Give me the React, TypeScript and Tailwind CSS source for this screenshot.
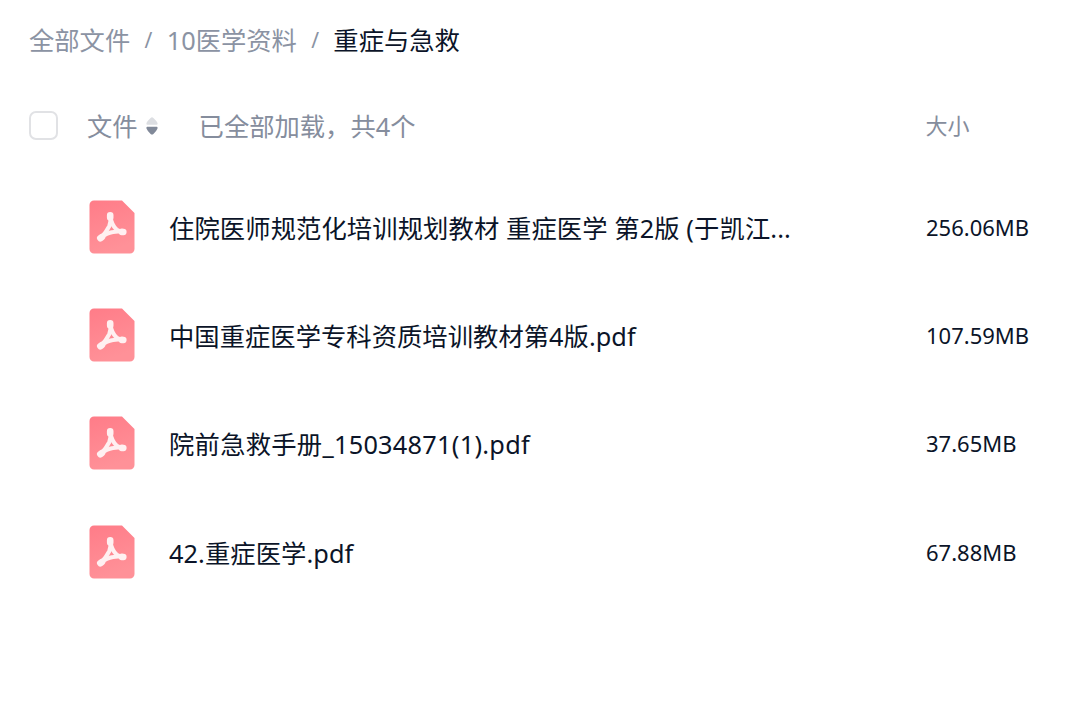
const crumbs = ["全部文件", "10医学资料"];

const files = [
  { name: "住院医师规范化培训规划教材 重症医学 第2版 (于凯江...", size: "256.06MB", tracking: "tracking-[0.11px]" },
  { name: "中国重症医学专科资质培训教材第4版.pdf", size: "107.59MB", tracking: "tracking-[0.04px]" },
  { name: "院前急救手册_15034871(1).pdf", size: "37.65MB", tracking: "tracking-[0.27px]" },
  { name: "42.重症医学.pdf", size: "67.88MB", tracking: "tracking-[0.08px]" },
];

const PdfIcon = () => (
  <svg width="46" height="54" viewBox="0 0 46 54" className="shrink-0">
    <defs>
      <linearGradient id="pdf" x1="0" y1="0" x2="0.3" y2="1">
        <stop offset="0" stopColor="#ff7c88" />
        <stop offset="1" stopColor="#ff9198" />
      </linearGradient>
    </defs>
    <path d="M5 .5H33L45.5 13V49a4.5 4.5 0 0 1-4.5 4.5H5A4.5 4.5 0 0 1 .5 49V5A4.5 4.5 0 0 1 5 .5Z" fill="url(#pdf)" />
    <g fill="none" stroke="#fff0f1" strokeLinecap="round" strokeLinejoin="round">
      <path d="M21.3 16Q22.2 22 20.3 26.2Q17.5 32 12 37.6" strokeWidth="4.2" />
      <path d="M21.3 16Q22.5 25 27.6 29.5Q30 31.5 34.5 32" strokeWidth="4.2" />
      <path d="M12 37.6Q17.5 33 24 32Q29 31 34.5 32" strokeWidth="4.2" />
      <path d="M21.2 15.2V17.6M11.3 38.2L13 37M33 31.9L34.3 32" strokeWidth="6.6" />
    </g>
  </svg>
);

const SortIcon = () => (
  <svg width="12" height="20" viewBox="0 0 12 20">
    <path d="M1.2 8.8C.4 8.8.2 7.8.6 6.8Q1.4 4.800 4.6 1.9Q6 .7 7.4 1.9Q10.6 4.8 11.4 6.8C11.8 7.8 11.6 8.8 10.8 8.8Z" fill="#dcdee2" />
    <path d="M1.2 10.8C.4 10.8.2 11.8.6 12.8Q1.4 15 4.6 18Q6 19.2 7.4 18Q10.6 15 11.4 12.8C11.8 11.8 11.6 10.8 10.8 10.8Z" fill="#818999" />
  </svg>
);

export default function App() {
  return (
    <div className="h-[720px] w-[1080px] overflow-hidden bg-white pl-[29px] font-['Noto_Sans','Noto_Sans_CJK_SC',sans-serif] text-[25.3px] text-[#0b1428]">
      <nav className="flex h-20 items-center whitespace-nowrap pt-px text-[#8b93a3]">
        {crumbs.map((c) => (
          <div key={c} className="flex">
            <span>{c}</span>
            <span className="w-[36.5px] text-center text-[21px] leading-[36px]">/</span>
          </div>
        ))}
        <span className="text-[#0b1428]">重症与急救</span>
      </nav>

      <div className="flex h-[91px] items-center whitespace-nowrap text-[#858d9d]">
        <span className="size-[29px] rounded-[7px] border-2 border-[#e1e2e5] bg-white" />
        <span className="ml-[29px] pt-[3px]">文件</span>
        <span className="ml-2">
          <SortIcon />
        </span>
        <span className="ml-[41px] w-[727px] pt-[3px]">已全部加载，共4个</span>
        <span className="text-[22px]">大小</span>
      </div>

      <div className="pt-[1.5px]">
        {files.map((f) => (
          <div key={f.name} className="flex h-[108.3px] items-center whitespace-nowrap pl-[60px]">
            <PdfIcon />
            <span className={`ml-[34px] w-[757px] pt-1 ${f.tracking}`}>{f.name}</span>
            <span className="pt-px text-[22px]">{f.size}</span>
          </div>
        ))}
      </div>
    </div>
  );
}
